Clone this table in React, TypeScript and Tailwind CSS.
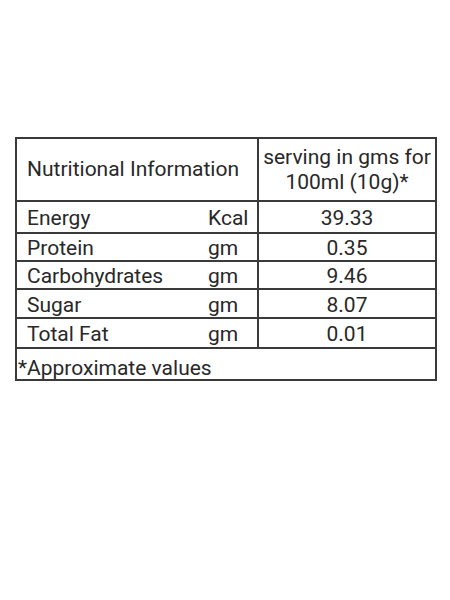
import React from "react";

const rows = [
  { name: "Energy", unit: "Kcal", value: "39.33", h: "h-[32px]" },
  { name: "Protein", unit: "gm", value: "0.35", h: "h-[28px]" },
  { name: "Carbohydrates", unit: "gm", value: "9.46", h: "h-[28px]" },
  { name: "Sugar", unit: "gm", value: "8.07", h: "h-[29px]" },
  { name: "Total Fat", unit: "gm", value: "0.01", h: "h-[30px]" },
];

const App = () => {
  return (
    <div className="w-[450px] h-[600px] bg-white pt-[137px] pl-[15px] text-[#282828] font-['Roboto',sans-serif] text-[21px]">
      <table className="border-collapse w-[422px]">
        <tbody>
          <tr className="h-[63px]">
            <td className="border-2 border-[#3a3a3a] w-[242px] pl-[10px] align-middle whitespace-nowrap">Nutritional Information</td>
            <td className="border-2 border-[#3a3a3a] text-center leading-[25px] align-middle whitespace-nowrap">
              serving in gms for
              <br />
              100ml (10g)*
            </td>
          </tr>
          {rows.map((r) => (
            <tr key={r.name} className={r.h}>
              <td className="border-2 border-[#3a3a3a] pl-[10px] pt-[3px] leading-none">
                <div className="flex">
                  <span className="w-[181px]">{r.name}</span>
                  <span>{r.unit}</span>
                </div>
              </td>
              <td className="border-2 border-[#3a3a3a] pt-[3px] text-center leading-none">{r.value}</td>
            </tr>
          ))}
          <tr className="h-[32px]">
            <td colSpan={2} className="border-2 border-[#3a3a3a] pl-[1px] align-bottom leading-[22px]">
              *Approximate values
            </td>
          </tr>
        </tbody>
      </table>
    </div>
  );
};

export default App;
